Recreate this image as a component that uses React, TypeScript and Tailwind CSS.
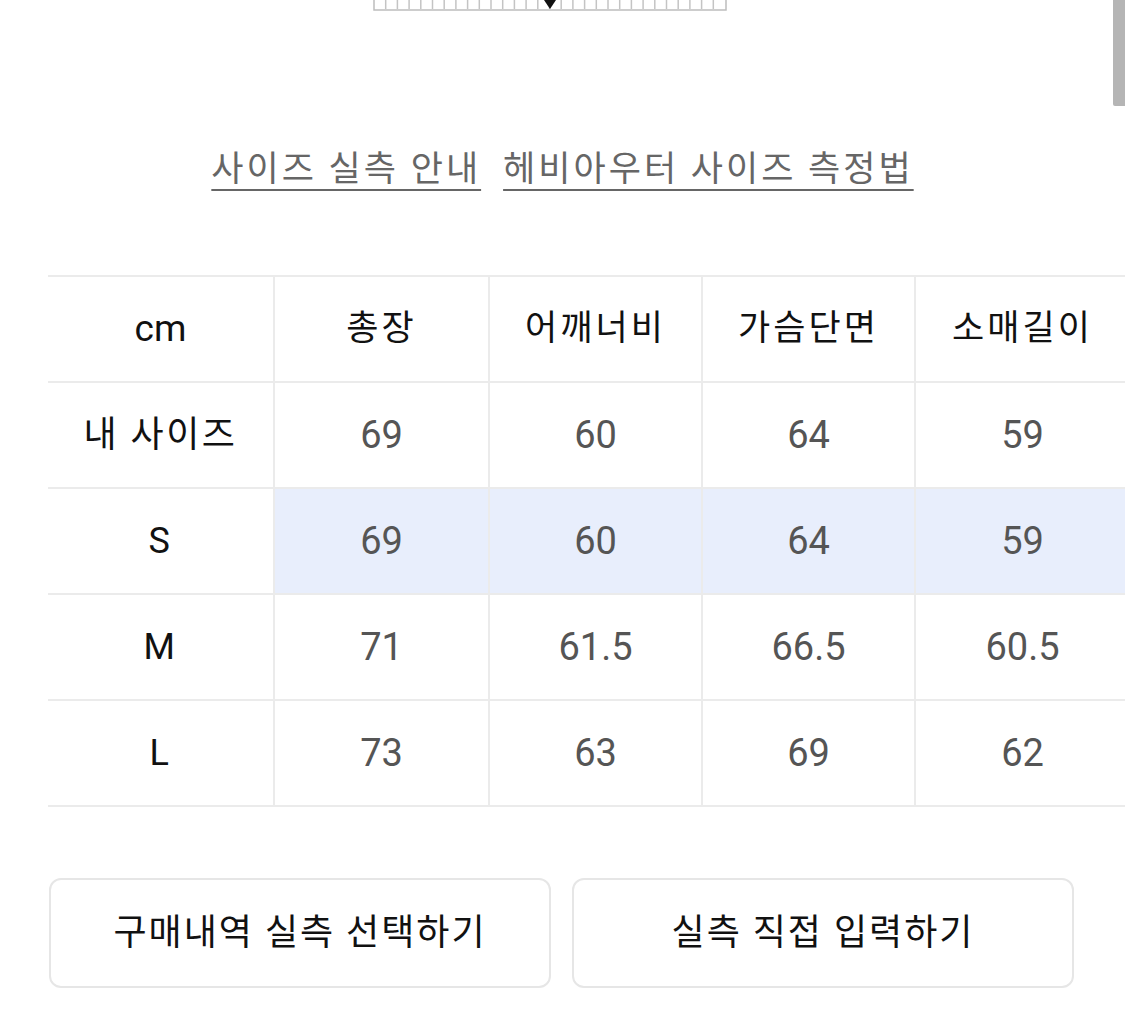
import React from "react";

const rows = [
  { label: "내 사이즈", vals: ["69", "60", "64", "59"], hl: false },
  { label: "S", vals: ["69", "60", "64", "59"], hl: true },
  { label: "M", vals: ["71", "61.5", "66.5", "60.5"], hl: false },
  { label: "L", vals: ["73", "63", "69", "62"], hl: false },
];
const heads = ["총장", "어깨너비", "가슴단면", "소매길이"];
const widths = ["w-[215px]", "w-[213px]", "w-[213px]", "w-[213px]"];

function Ruler() {
  const ticks = [];
  for (let i = 1; i < 30; i++) {
    const x = 1 + i * 11.7;
    ticks.push(<line key={i} x1={x} y1={0} x2={x} y2={9} stroke="#c4c4c4" strokeWidth="1.5" />);
  }
  return (
    <svg width="356" height="14" viewBox="0 0 356 14" className="block">
      <rect x="1" y="-2" width="352" height="12" fill="#fff" stroke="#bdbdbd" strokeWidth="1.5" />
      {ticks}
      <polygon points="171,0 183,0 177,9" fill="#111" />
    </svg>
  );
}

export default function App() {
  return (
    <div
      className="relative w-[1125px] h-[1031px] overflow-hidden bg-white"
      style={{ fontFamily: "Roboto, 'Noto Sans CJK KR', sans-serif" }}
    >
      <div className="absolute right-0 top-0 w-[12px] h-[106px] bg-[#b5b5b5] rounded-bl-[2px]" />
      <div className="pl-[373px]">
        <Ruler />
      </div>
      <div className="mt-[134px] flex justify-center gap-[22px] text-[35px] leading-[44px] text-[#666] tracking-[3px]">
        <span className="underline decoration-2 underline-offset-[8px] decoration-[#666]">사이즈 실측 안내</span>
        <span className="underline decoration-2 underline-offset-[8px] decoration-[#666]">헤비아우터 사이즈 측정법</span>
      </div>
      <div className="mt-[83px] ml-[48px] w-[1081px] border-t-2 border-[#ebebeb]">
        <div className="flex h-[106px] border-b-2 border-[#ebebeb]">
          <div className="w-[227px] shrink-0 flex items-center justify-center border-r-2 border-[#ebebeb] text-[37px] text-[#111]">cm</div>
          {heads.map((h, i) => (
            <div
              key={h}
              className={`${widths[i]} shrink-0 flex items-center justify-center text-[35px] tracking-[3px] text-[#111] ${i < 3 ? "border-r-2 border-[#ebebeb]" : ""}`}
            >
              {h}
            </div>
          ))}
        </div>
        {rows.map((r) => (
          <div key={r.label} className="flex h-[106px] border-b-2 border-[#ebebeb]">
            <div className="w-[227px] shrink-0 flex items-center justify-center border-r-2 border-[#ebebeb] text-[36px] tracking-[2.5px] text-[#111]">
              {r.label}
            </div>
            {r.vals.map((v, i) => (
              <div
                key={i}
                className={`${widths[i]} shrink-0 flex items-center justify-center text-[38px] text-[#555] ${r.hl ? "bg-[#e8eefc]" : ""} ${i < 3 ? "border-r-2 border-[#ebebeb]" : ""}`}
              >
                {v}
              </div>
            ))}
          </div>
        ))}
      </div>
      <div className="mt-[71px] px-[49px] flex gap-[21px]">
        <button className="w-[502px] h-[110px] rounded-[12px] border-2 border-[#e6e6e6] bg-white text-[36px] tracking-[2px] text-[#111]">
          구매내역 실측 선택하기
        </button>
        <button className="w-[502px] h-[110px] rounded-[12px] border-2 border-[#e6e6e6] bg-white text-[36px] tracking-[2px] text-[#111]">
          실측 직접 입력하기
        </button>
      </div>
    </div>
  );
}
